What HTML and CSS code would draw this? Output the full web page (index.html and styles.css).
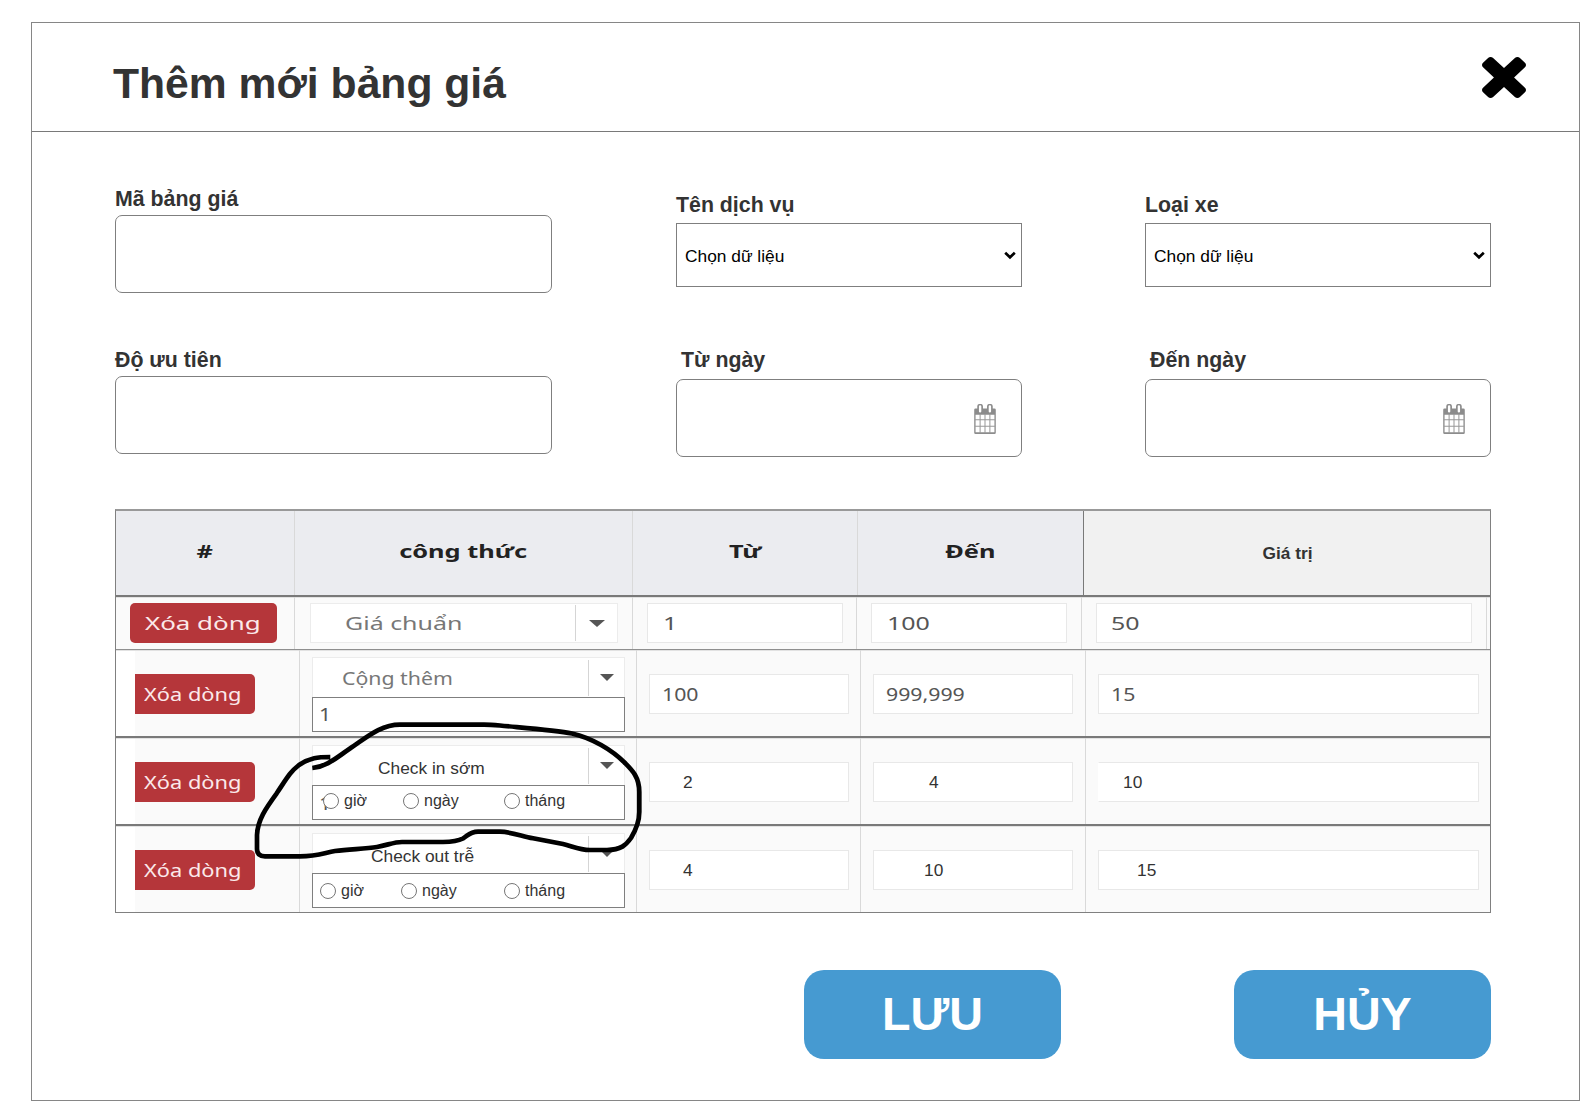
FILE: index.html
```html
<!DOCTYPE html>
<html lang="vi">
<head>
<meta charset="utf-8">
<title>Thêm mới bảng giá</title>
<link rel="stylesheet" href="styles.css">
</head>
<body>
<svg class="defs" width="0" height="0">
  <symbol id="calendar" viewBox="0 0 64 89">
    <path fill="#8c8c8c" fill-rule="evenodd" d="M4 13H9V7a8 7 0 0 1 17 0V13H38V7a8 7 0 0 1 17 0V13H60a4 4 0 0 1 4 4V85a4 4 0 0 1-4 4H4a4 4 0 0 1-4-4V17a4 4 0 0 1 4-4ZM4 32V84H60V32ZM14 7V22a3.500 3 0 0 0 7 0V7a3.500 3 0 0 0-7 0ZM43 7V22a3.500 3 0 0 0 7 0V7a3.500 3 0 0 0-7 0Z"/>
    <path stroke="#999" stroke-width="3" d="M17.500 30V86M32 30V86M46.500 30V86M2 47H62M2 66H62"/>
  </symbol>
  <symbol id="chevron" viewBox="0 0 12 9"><path d="M1.200 1.700 6 6.300 10.800 1.700" fill="none" stroke="#000" stroke-width="2.700"/></symbol>
</svg>
<main class="modal">
  <header class="modal-head">
    <h1>Thêm mới bảng giá</h1>
    <svg class="close" viewBox="110 366 1188 1188" preserveAspectRatio="none"><path d="M1298 1322q0 40-28 68l-136 136q-28 28-68 28t-68-28l-294-294-294 294q-28 28-68 28t-68-28l-136-136q-28-28-28-68t28-68l294-294-294-294q-28-28-28-68t28-68l136-136q28-28 68-28t68 28l294 294 294-294q28-28 68-28t68 28l136 136q28 28 28 68t-28 68l-294 294 294 294q28 28 28 68z"/></svg>
  </header>

  <section class="form">
    <div class="field code"><label>Mã bảng giá</label><div class="input"></div></div>
    <div class="field pick"><label>Tên dịch vụ</label><div class="select"><span>Chọn dữ liệu</span><svg><use href="#chevron"/></svg></div></div>
    <div class="field pick"><label>Loại xe</label><div class="select"><span>Chọn dữ liệu</span><svg><use href="#chevron"/></svg></div></div>
    <div class="field priority"><label>Độ ưu tiên</label><div class="input"></div></div>
    <div class="field date"><label>Từ ngày</label><div class="input"><svg><use href="#calendar"/></svg></div></div>
    <div class="field date"><label>Đến ngày</label><div class="input"><svg><use href="#calendar"/></svg></div></div>
  </section>

  <section class="table">
    <div class="row head">
      <div class="cell"><span class="th">#</span></div>
      <div class="cell"><span class="th">công thức</span></div>
      <div class="cell"><span class="th">Từ</span></div>
      <div class="cell"><span class="th">Đến</span></div>
      <div class="cell value">Giá trị</div>
    </div>
    <div class="row first">
      <div class="cell"><div class="del"><span class="seg">Xóa dòng</span></div></div>
      <div class="cell"><div class="combo"><span class="seg name">Giá chuẩn</span><i class="caret"></i></div></div>
      <div class="cell"><div class="box"><span class="seg">1</span></div></div>
      <div class="cell"><div class="box"><span class="seg">100</span></div></div>
      <div class="cell"><div class="box"><span class="seg">50</span></div></div>
      <div class="cell"></div>
    </div>
    <div class="row">
      <div class="cell"><div class="del"><span class="seg">Xóa dòng</span></div></div>
      <div class="cell"><div class="combo"><span class="seg name">Cộng thêm</span><i class="caret"></i></div><div class="sub"><span class="seg">1</span></div></div>
      <div class="cell"><div class="box"><span class="seg">100</span></div></div>
      <div class="cell"><div class="box"><span class="seg">999,999</span></div></div>
      <div class="cell"><div class="box"><span class="seg">15</span></div></div>
    </div>
    <div class="row early">
      <div class="cell"><div class="del"><span class="seg">Xóa dòng</span></div></div>
      <div class="cell"><div class="combo"><span class="name">Check in sớm</span><i class="caret"></i></div>
        <div class="sub units"><span class="seg stale">1</span><span class="unit"><i></i>giờ</span><span class="unit"><i></i>ngày</span><span class="unit"><i></i>tháng</span></div></div>
      <div class="cell"><div class="box plain">2</div></div>
      <div class="cell"><div class="box plain">4</div></div>
      <div class="cell"><div class="box plain">10</div></div>
    </div>
    <div class="row late">
      <div class="cell"><div class="del"><span class="seg">Xóa dòng</span></div></div>
      <div class="cell"><div class="combo"><span class="name">Check out trễ</span><i class="caret"></i></div>
        <div class="sub units"><span class="unit"><i></i>giờ</span><span class="unit"><i></i>ngày</span><span class="unit"><i></i>tháng</span></div></div>
      <div class="cell"><div class="box plain">4</div></div>
      <div class="cell"><div class="box plain">10</div></div>
      <div class="cell"><div class="box plain">15</div></div>
    </div>
  </section>

  <footer class="actions"><div class="btn">LƯU</div><div class="btn">HỦY</div></footer>

  <!-- freehand loop around the check-in option -->
  <svg class="scribble" viewBox="250 718 396 146"><path d="M330.300 757C318 757 310 757.500 299 765C290 772 287 778 276.700 793.300C266 808 257.500 820 257 835V849Q257 856.300 265 856.300H300C318 856.300 325 852.500 335 851C350 849 365 849 377 847C388 845 394 842 402 842H443C452 841.800 458 841 463 838.500C468 835.500 470 831.700 478 831.700H500C512 832 521 836 533 838.300L563 844C572 846 579 850 590 850H607C621 850 626 845 631 838C637 828 639.300 820 639.300 812V792C639.300 777 632 770 625 763C612 750 592 738 572 733.500C555 730 520 727.500 500 725.500Q490 724.700 484 724.700H400C380 724.700 366 738 350 748.500C336 758 327 766.500 312.300 768"/></svg>
</main>
</body>
</html>
```
FILE: styles.css
```css
* { box-sizing: border-box; }
body { margin: 0; background: #fff; color: #333; font-family: "Liberation Sans", Arial, sans-serif; }
.defs { position: absolute; }
.modal { position: relative; width: 1549px; height: 1079px; margin: 22px 0 0 31px; border: 1px solid #868686; }
.modal-head { display: flex; justify-content: space-between; align-items: center; height: 109px; padding: 0 53px 0 81px; border-bottom: 1px solid #797979; }
h1 { margin: 0; padding-top: 13px; font-size: 42.67px; line-height: 51px; }
.close { width: 44px; height: 41px; margin-top: 1px; }

.form { display: grid; grid-template-columns: 561px 469px 346px; grid-template-rows: 161px 161px; padding: 55px 0 0 83px; }
.field label { display: block; font-weight: bold; font-size: 21.33px; line-height: 25px; height: 28px; }
.input { height: 78px; border: 1px solid #7f7f7f; border-radius: 7px; }
.code, .priority { width: 437px; }
.pick, .date { width: 346px; }
.pick { padding-top: 6px; }
.pick label { height: 30px; }
.select { display: flex; justify-content: space-between; align-items: center; height: 64px; padding: 3px 5px 0 8px; border: 1px solid #7f7f7f; color: #000; font-size: 17.33px; }
.select svg { width: 12px; height: 9px; margin-top: -3px; }
.date label { height: 31px; padding-left: 5px; }
.date .input { display: flex; justify-content: flex-end; align-items: center; padding: 2px 25px 0 0; }
.date svg { width: 22px; height: 30px; }

.table { width: 1376px; margin-left: 83px; border: 1px solid #808080; border-top: 2px solid #999; }
.row { display: grid; grid-template-columns: 184px 337px 224px 225px 404px; height: 88px; background: linear-gradient(90deg, #fff 19px, #fafafa 19px); border-bottom: 2px solid #797979; }
.row + .row { box-shadow: inset 0 1px #e2e2e2; }
.cell { border-right: 1px solid #d9d9d9; }
.cell:last-child { border-right: 0; }
.head { grid-template-columns: 179px 338px 225px 225px 407px; height: 86px; background: #ebecf0; }
.head .cell { display: flex; justify-content: center; align-items: center; padding-bottom: 4px; }
.head .cell:nth-child(4) { border-right: 0; }
.head .value { padding: 0 0 0 1px; background: #f1f1f1; border-left: 1px solid #797979; font-weight: bold; font-size: 17.33px; }
.th { color: #222; font: bold 17.500px/24px "Noto Sans", sans-serif; transform: scaleX(1.45); }
.seg { display: inline-block; color: #555; font: 18.500px/24px "Noto Sans", sans-serif; transform: scaleX(1.15); transform-origin: 0 50%; white-space: nowrap; }
.first .seg { transform: scaleX(1.35); }
.del { display: flex; align-items: center; width: 120px; height: 40px; margin: 24px 0 0 19px; padding-left: 9px; background: #b5363a; border-radius: 0 5px 5px 0; }
.del .seg { color: #fbe9ea; transform: scaleX(1.18); }
.combo { display: flex; align-items: center; justify-content: space-between; width: 313px; height: 40px; margin: 7px 0 0 12px; padding-left: 29px; border: 1px solid #ececec; border-bottom: 0; background: #fff; }
.combo .seg { color: #777; }
.caret { display: flex; justify-content: center; align-items: center; width: 36px; height: 36px; border-left: 1px solid #d5d5d5; }
.caret::before { content: ""; border: 7px solid transparent; border-top-color: #555; border-bottom: 0; }
.sub { display: flex; align-items: center; width: 313px; height: 35px; margin-left: 12px; padding: 0 0 1px 6px; background: #fff; border: 1px solid #7f7f7f; }
.box { display: flex; align-items: center; width: 200px; height: 40px; margin: 24px 0 0 12px; padding-left: 12px; background: #fff; border: 1px solid #e8e8e8; }
.cell:nth-child(5) .box { width: 381px; margin-left: 12px; }

.first { grid-template-columns: 179px 338px 224px 225px 405px 3px; height: 53px; background: #fafafa; border-bottom: 1px solid #8f8f8f; }
.first .del { width: 147px; margin: 6px 0 0 14px; padding-left: 15px; border-radius: 5px; }
.first .del .seg { transform: scaleX(1.4); }
.first .combo { width: 308px; margin: 6px 0 0 15px; padding-left: 34px; border-bottom: 1px solid #ececec; }
.first .caret { width: 42px; }
.first .caret::before { border-width: 7px 8px 0; }
.first .box { width: 196px; margin: 6px 0 0 14px; padding-left: 15px; }
.first .cell:nth-child(5) .box { width: 376px; margin-left: 14px; padding-left: 14px; }

.early .combo, .late .combo { font-size: 17.33px; }
.early .name, .late .name { padding-top: 6px; }
.early .combo { padding-left: 65px; }
.late .combo { padding-left: 58px; }
.plain { font-size: 17.33px; padding: 1px 0 0 33px; }
.early .cell:nth-child(4) .box { padding-left: 55px; }
.early .cell:nth-child(5) .box { padding-left: 24px; border-left-color: #fff; }
.late .cell:nth-child(4) .box { padding-left: 50px; }
.late .cell:nth-child(5) .box { padding-left: 38px; }
.units { position: relative; font-size: 16px; }
.early .units { padding: 0 0 4px 10px; }
.late .units { padding: 0 0 0 7px; }
.unit { position: relative; display: flex; align-items: center; gap: 5px; width: 80px; }
.late .unit { width: 81px; }
.early .unit:nth-last-child(2) { width: 101px; }
.late .unit:nth-last-child(2) { width: 103px; }
.unit i { width: 16px; height: 16px; border: 1px solid #767676; border-radius: 50%; background: #fff; }
.stale { position: absolute; left: 6px; top: 5px; }
.late { height: 86px; border-bottom: 0; }

.actions { display: flex; justify-content: flex-end; gap: 173px; padding: 57px 88px 0 0; }
.btn { width: 257px; height: 89px; border-radius: 20px; background: #469ad1; color: #fff; font-weight: bold; font-size: 46.67px; line-height: 89px; text-align: center; }
.scribble { position: absolute; left: 218px; top: 695px; width: 396px; height: 146px; fill: none; stroke: #000; stroke-width: 4.700; }
```
